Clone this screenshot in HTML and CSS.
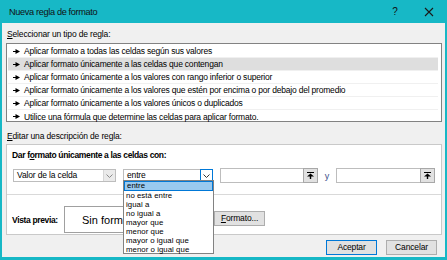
FILE: index.html
```html
<!DOCTYPE html>
<html lang="es">
<head>
<meta charset="utf-8">
<title>Nueva regla de formato</title>
<link rel="stylesheet" href="styles.css">
</head>
<body>
<div class="window">
  <div class="titlebar">
    <span class="title">Nueva regla de formato</span>
    <span class="tb-help">?</span>
    <span class="tb-close">
      <svg width="10" height="10" viewBox="0 0 10 10"><path d="M1 1L9 9M9 1L1 9" stroke="#1a1a1a" stroke-width="1.1"/></svg>
    </span>
  </div>
  <div class="content">
    <div class="section-label"><u>S</u>eleccionar un tipo de regla:</div>
    <div class="listbox">
      <div class="row"><svg class="arr" width="7" height="5" viewBox="0 0 7 5"><path d="M0 2.5H3" stroke="#000" stroke-width="1"/><path d="M2.5 0L7 2.5L2.5 5Z" fill="#000"/></svg>Aplicar formato a todas las celdas según sus valores</div>
      <div class="row selected"><svg class="arr" width="7" height="5" viewBox="0 0 7 5"><path d="M0 2.5H3" stroke="#000" stroke-width="1"/><path d="M2.5 0L7 2.5L2.5 5Z" fill="#000"/></svg>Aplicar formato únicamente a las celdas que contengan</div>
      <div class="row"><svg class="arr" width="7" height="5" viewBox="0 0 7 5"><path d="M0 2.5H3" stroke="#000" stroke-width="1"/><path d="M2.5 0L7 2.5L2.5 5Z" fill="#000"/></svg>Aplicar formato únicamente a los valores con rango inferior o superior</div>
      <div class="row"><svg class="arr" width="7" height="5" viewBox="0 0 7 5"><path d="M0 2.5H3" stroke="#000" stroke-width="1"/><path d="M2.5 0L7 2.5L2.5 5Z" fill="#000"/></svg>Aplicar formato únicamente a los valores que estén por encima o por debajo del promedio</div>
      <div class="row"><svg class="arr" width="7" height="5" viewBox="0 0 7 5"><path d="M0 2.5H3" stroke="#000" stroke-width="1"/><path d="M2.5 0L7 2.5L2.5 5Z" fill="#000"/></svg>Aplicar formato únicamente a los valores únicos o duplicados</div>
      <div class="row last"><svg class="arr" width="7" height="5" viewBox="0 0 7 5"><path d="M0 2.5H3" stroke="#000" stroke-width="1"/><path d="M2.5 0L7 2.5L2.5 5Z" fill="#000"/></svg>Utilice una fórmula que determine las celdas para aplicar formato.</div>
    </div>

    <div class="section-label second"><u>E</u>ditar una descripción de regla:</div>
    <div class="descbox">
      <div class="bold-label">Dar f<u>o</u>rmato únicamente a las celdas con:</div>
      <div class="controls">
        <div class="select sel1">
          <span class="sel-text">Valor de la celda</span>
          <span class="sel-btn gray"><svg width="7" height="4" viewBox="0 0 7 4"><path d="M0.5 0.5L3.5 3.5L6.5 0.5" fill="none" stroke="#8a8a8a" stroke-width="1"/></svg></span>
        </div>
        <div class="select sel2">
          <span class="sel-text">entre</span>
          <span class="sel-btn blue"><svg width="7" height="4" viewBox="0 0 7 4"><path d="M0.5 0.5L3.5 3.5L6.5 0.5" fill="none" stroke="#333" stroke-width="1"/></svg></span>
        </div>
        <div class="refinput in1">
          <span class="ref-btn"><svg width="7" height="7" viewBox="0 0 7 7"><path d="M0 0.5H7" stroke="#000" stroke-width="1"/><path d="M3.5 1.5L7 4.5H0Z" fill="#000"/><path d="M3.5 4V7" stroke="#000" stroke-width="1.4"/></svg></span>
        </div>
        <span class="y-label">y</span>
        <div class="refinput in2">
          <span class="ref-btn"><svg width="7" height="7" viewBox="0 0 7 7"><path d="M0 0.5H7" stroke="#000" stroke-width="1"/><path d="M3.5 1.5L7 4.5H0Z" fill="#000"/><path d="M3.5 4V7" stroke="#000" stroke-width="1.4"/></svg></span>
        </div>
      </div>
      <div class="sep"></div>
      <div class="preview-row">
        <span class="bold-label pv">Vista previa:</span>
        <div class="preview-box"><span>Sin formato establecido</span></div>
        <div class="btn fmt"><u>F</u>ormato...</div>
      </div>
    </div>

    <div class="footer">
      <div class="btn ok">Aceptar</div>
      <div class="btn cancel">Cancelar</div>
    </div>

    <div class="dropdown">
      <div class="opt active">entre</div>
      <div class="opt">no está entre</div>
      <div class="opt">igual a</div>
      <div class="opt">no igual a</div>
      <div class="opt">mayor que</div>
      <div class="opt">menor que</div>
      <div class="opt">mayor o igual que</div>
      <div class="opt">menor o igual que</div>
    </div>
  </div>
</div>
</body>
</html>
```

FILE: styles.css
```css
* { box-sizing: border-box; }
html, body { margin: 0; padding: 0; }
body {
  font-family: "Liberation Sans", Arial, sans-serif;
  font-size: 8.5px;
  letter-spacing: -0.15px;
  color: #000;
  background: #fff;
}
.window {
  width: 447px;
  height: 260px;
  background: #17b8c6;
  padding: 0 2px 3px 2px;
  display: flex;
  flex-direction: column;
}
.titlebar {
  height: 23px;
  display: flex;
  align-items: center;
  padding-left: 7px;
  color: #111;
}
.title { font-size: 9.2px; letter-spacing: -0.35px; flex: 1; }
.tb-help { font-size: 10px; width: 24px; margin-right: 10px; text-align: center; }
.tb-close { width: 24px; display: flex; justify-content: center; margin-right: 4px; }
.content {
  flex: 1;
  background: #f0f0f0;
  padding: 4px 3px 0 4px;
  position: relative;
}
.section-label { height: 13px; line-height: 13px; padding-left: 1px; margin-top: 1px; }
.section-label.second { margin-top: 8px; }
.listbox {
  margin-top: 2px;
  width: 436px;
  height: 79px;
  background: #fff;
  border: 1px solid #828282;
  padding: 1px 3px 0 1px;
}
.row {
  height: 13px;
  line-height: 12px;
  border-bottom: 1px solid #f0f0f0;
  display: flex;
  align-items: center;
  padding-left: 5px;
  letter-spacing: -0.2px;
}
.row.last { border-bottom: none; }
.row.selected { background: #dedede; }
.arr { margin-right: 4px; flex: none; }
.descbox {
  margin-top: 1px;
  width: 436px;
  height: 91px;
  background: #fff;
  border: 1px solid #c9c9c9;
}
.bold-label { font-weight: bold; letter-spacing: -0.35px; }
.descbox > .bold-label { height: 13px; line-height: 13px; padding-left: 5px; margin-top: 4px; }
.controls {
  display: flex;
  align-items: center;
  margin-top: 6px;
  padding-left: 6px;
  height: 15px;
}
.select {
  height: 13px;
  border: 1px solid #bdbdbd;
  background: #fff;
  display: flex;
  align-items: stretch;
}
.sel1 { width: 103px; }
.sel2 { width: 90px; margin-left: 7px; }
.sel-text { flex: 1; padding-left: 3px; line-height: 11px; }
.sel-btn {
  width: 12px;
  display: flex;
  align-items: center;
  justify-content: center;
}
.sel-btn.gray { background: #eaeaea; border-left: 1px solid #d6d6d6; }
.sel-btn.blue { border: 1px solid #0078d7; margin: -1px -1px -1px 0; width: 13px; }
.refinput {
  height: 15px;
  border: 1px solid #bdbdbd;
  background: #fff;
  display: flex;
  justify-content: flex-end;
}
.in1 { width: 98px; margin-left: 7px; }
.in2 { width: 99px; }
.y-label { width: 18px; text-align: center; color: #3a4f8a; font-size: 9px; }
.ref-btn {
  width: 15px;
  height: 15px;
  margin: -1px -1px -1px 0;
  background: #e1e1e1;
  border: 1px solid #a8a8a8;
  display: flex;
  align-items: center;
  justify-content: center;
}
.sep { height: 1px; background: #d9d9d9; margin-top: 11px; }
.preview-row {
  display: flex;
  align-items: center;
  margin-top: 11px;
  padding-left: 5px;
}
.pv { width: 52px; }
.preview-box {
  width: 149px;
  height: 27px;
  border: 1px solid #a0a0a0;
  background: #fff;
  display: flex;
  align-items: center;
  padding-left: 17px;
  overflow: hidden;
  white-space: nowrap;
  font-size: 11px;
  letter-spacing: 0;
}
.btn {
  height: 15px;
  line-height: 13px;
  text-align: center;
  background: #e1e1e1;
  border: 1px solid #adadad;
}
.fmt { width: 51px; margin-left: 1px; margin-top: -2px; }
.footer {
  display: flex;
  justify-content: flex-end;
  gap: 9px;
  margin-top: 5px;
  padding-right: 5px;
}
.ok { width: 51px; border-color: #0078d7; }
.cancel { width: 51px; }
.dropdown {
  position: absolute;
  left: 121px;
  top: 157px;
  width: 91px;
  height: 74px;
  background: #fff;
  border: 1px solid #828282;
  padding: 0 0 1px 0;
}
.opt {
  height: 9px;
  line-height: 9px;
  font-size: 7.8px;
  letter-spacing: 0.05px;
  padding-left: 2px;
}
.opt.active { background: #99c9ef; border: 1px solid #0078d7; line-height: 7px; height: 9.5px; }
```
